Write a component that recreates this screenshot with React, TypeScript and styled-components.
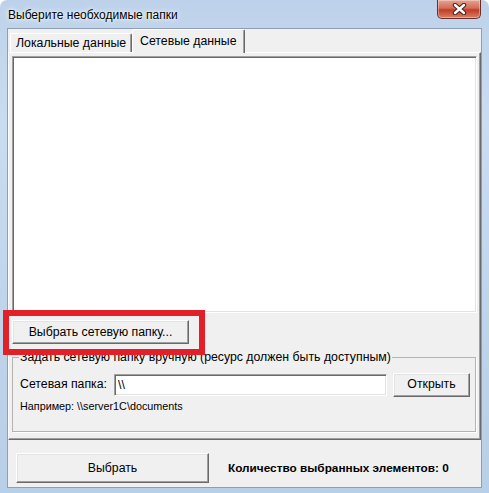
import React from "react";
import styled, { createGlobalStyle } from "styled-components";

const GlobalStyle = createGlobalStyle`
  html, body { margin: 0; padding: 0; background: #ffffff; }
  body { font-family: "Liberation Sans", Arial, sans-serif; color: #000; }
  #root { width: 489px; height: 493px; }
`;

const FONT = `"Liberation Sans", Arial, sans-serif`;
const UI = "12.3px";

const Frame = styled.div`
  position: relative;
  width: 489px;
  height: 493px;
  box-sizing: border-box;
  display: flex;
  flex-direction: column;
  background: linear-gradient(180deg, #bdd2ea 0%, #cadcf0 25%, #c0d5ec 60%, #b8cfe8 100%);
  border-radius: 7px 7px 0 0;
  overflow: hidden;
`;

const TitleBar = styled.div`
  flex-shrink: 0;
  height: 29px;
  box-sizing: border-box;
  display: flex;
  justify-content: space-between;
  align-items: flex-start;
  padding: 0 8px;
`;

const Title = styled.span`
  margin-top: 8px;
  font: 12px/14px ${FONT};
  color: #000;
  text-shadow: 0 0 6px #ffffff, 0 0 3px #ffffff;
`;

const CloseBtn = styled.div`
  width: 44px;
  height: 19px;
  box-sizing: border-box;
  border: 1px solid #6a2f28;
  border-top: none;
  border-radius: 0 0 5px 5px;
  background: linear-gradient(180deg, #e7a393 0%, #d46c58 45%, #c23d24 55%, #d7806b 100%);
  box-shadow: inset 0 0 0 1px rgba(255, 255, 255, 0.35);
  display: flex;
  align-items: center;
  justify-content: center;
`;

const Client = styled.div`
  flex: 1;
  min-height: 0;
  margin: 0 8px 6px;
  background: #f0f0f0;
  display: flex;
  flex-direction: column;
  box-shadow: 0 0 0 1px #8e9fb3;
`;

const TabStrip = styled.div`
  position: relative;
  z-index: 1;
  height: 24px;
  margin-bottom: -1px;
  padding-left: 2px;
  display: flex;
  align-items: flex-start;
`;

const Tab = styled.div<{ $active?: boolean; $w: number }>`
  width: ${(p) => p.$w}px;
  height: ${(p) => (p.$active ? 24 : 19)}px;
  margin-top: ${(p) => (p.$active ? 0 : 4)}px;
  box-sizing: border-box;
  border-left: 1px solid #ffffff;
  border-top: 1px solid #ffffff;
  border-right: 1px solid #696969;
  box-shadow: inset -1px 0 0 #a0a0a0;
  border-radius: 2px 2px 0 0;
  background: #f0f0f0;
  padding-left: ${(p) => (p.$active ? 7 : 5)}px;
  font: ${UI}/${(p) => (p.$active ? 22 : 18)}px ${FONT};
  white-space: nowrap;
`;

const Panel = styled.div`
  flex: 0 0 388px;
  box-sizing: border-box;
  border: 1px solid;
  border-color: #ffffff #696969 #696969 #ffffff;
  box-shadow: inset -1px -1px 0 #a0a0a0;
  padding: 3px 3px 0 3px;
  display: flex;
  flex-direction: column;
  align-items: flex-start;
`;

const ListBox = styled.div`
  width: 465px;
  height: 257px;
  box-sizing: border-box;
  background: #ffffff;
  border: 1px solid;
  border-color: #a0a0a0 #ffffff #ffffff #a0a0a0;
  box-shadow: inset 1px 1px 0 #696969, inset -1px -1px 0 #e3e3e3;
`;

const Button = styled.button<{ $w: number; $h: number }>`
  width: ${(p) => p.$w}px;
  height: ${(p) => p.$h}px;
  margin: 0;
  padding: 0;
  flex-shrink: 0;
  box-sizing: border-box;
  background: #f0f0f0;
  border: 1px solid;
  border-color: #ffffff #696969 #696969 #ffffff;
  box-shadow: inset -1px -1px 0 #a0a0a0, inset 1px 1px 0 #e3e3e3;
  font: ${UI}/1 ${FONT};
  color: #000;
  text-align: center;
`;

const NetButton = styled(Button)`
  margin-top: 7px;
`;

const Group = styled.fieldset`
  margin: 6px 0 0 0;
  width: 464px;
  min-width: 0;
  box-sizing: border-box;
  padding: 7px 5px 18px 7px;
  border: 1px solid #b4b4b4;
  box-shadow: 1px 1px 0 #ffffff;
`;

const Legend = styled.legend`
  padding: 0 1px;
  margin-left: -1px;
  font: ${UI}/15px ${FONT};
  white-space: nowrap;
`;

const Row = styled.div`
  display: flex;
  align-items: center;
  height: 25px;
`;

const Label = styled.span`
  width: 94px;
  flex-shrink: 0;
  font: ${UI}/15px ${FONT};
  white-space: nowrap;
`;

const PathInput = styled.input`
  width: 273px;
  height: 22px;
  box-sizing: border-box;
  margin: 0;
  padding: 0 3px;
  background: #ffffff;
  border: 1px solid;
  border-color: #a0a0a0 #ffffff #ffffff #a0a0a0;
  box-shadow: inset 1px 1px 0 #696969, inset -1px -1px 0 #e3e3e3;
  font: ${UI} ${FONT};
  color: #000;
  outline: none;
`;

const OpenButton = styled(Button)`
  margin-left: 6px;
`;

const Hint = styled.div`
  margin-top: 3px;
  font: 10.8px/13px ${FONT};
  white-space: nowrap;
`;

const BottomBar = styled.div`
  flex: 1;
  box-sizing: border-box;
  padding: 13px 0 0 8px;
  display: flex;
  align-items: flex-start;
`;

const Count = styled.span`
  margin-left: 19px;
  font: bold 11.8px/30px ${FONT};
  white-space: nowrap;
`;

const Highlight = styled.div`
  position: absolute;
  left: 3px;
  top: 310px;
  width: 202px;
  height: 45px;
  box-sizing: border-box;
  border: 6px solid #e2202a;
  pointer-events: none;
`;

const CloseIcon = () => (
  <svg width="15" height="12" viewBox="0 0 15 12">
    <path d="M3 2 L12 10 M12 2 L3 10" stroke="#4a1f1a" strokeWidth="4.4" strokeLinecap="round" />
    <path d="M3 2 L12 10 M12 2 L3 10" stroke="#ffffff" strokeWidth="2.4" strokeLinecap="round" />
  </svg>
);

export default function App() {
  return (
    <>
      <GlobalStyle />
      <Frame>
        <TitleBar>
          <Title>Выберите необходимые папки</Title>
          <CloseBtn>
            <CloseIcon />
          </CloseBtn>
        </TitleBar>
        <Client>
          <TabStrip>
            <Tab $w={122}>Локальные данные</Tab>
            <Tab $w={113} $active>
              Сетевые данные
            </Tab>
          </TabStrip>
          <Panel>
            <ListBox />
            <NetButton $w={177} $h={24}>
              Выбрать сетевую папку...
            </NetButton>
            <Group>
              <Legend>Задать сетевую папку вручную (ресурс должен быть доступным)</Legend>
              <Row>
                <Label>Сетевая папка:</Label>
                <PathInput defaultValue={"\\\\"} />
                <OpenButton $w={77} $h={24}>
                  Открыть
                </OpenButton>
              </Row>
              <Hint>Например: \\server1C\documents</Hint>
            </Group>
          </Panel>
          <BottomBar>
            <Button $w={193} $h={30}>
              Выбрать
            </Button>
            <Count>Количество выбранных элементов: 0</Count>
          </BottomBar>
        </Client>
        <Highlight />
      </Frame>
    </>
  );
}
